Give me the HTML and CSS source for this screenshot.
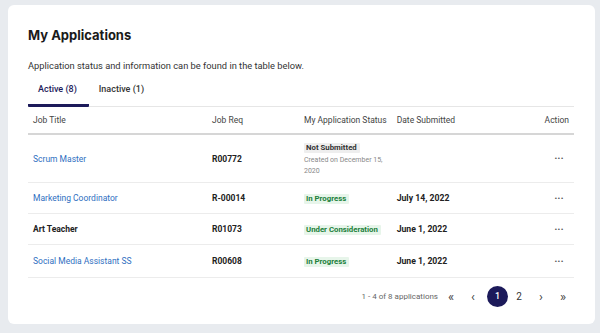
FILE: index.html
```html
<!DOCTYPE html>
<html>
<head>
<meta charset="utf-8">
<link rel="stylesheet" href="styles.css">
</head>
<body>
<div class="card">
  <h1 class="title">My Applications</h1>
  <p class="subtitle">Application status and information can be found in the table below.</p>
  <div class="tabs">
    <div class="tab active">Active (8)</div>
    <div class="tab">Inactive (1)</div>
  </div>
  <table class="apps">
    <thead>
      <tr>
        <th class="c-title">Job Title</th>
        <th class="c-req">Job Req</th>
        <th class="c-status">My Application Status</th>
        <th class="c-date">Date Submitted</th>
        <th class="c-action">Action</th>
      </tr>
    </thead>
    <tbody>
      <tr class="tall">
        <td><a class="link">Scrum Master</a></td>
        <td class="req">R00772</td>
        <td>
          <span class="badge grey">Not Submitted</span>
          <div class="created">Created on December 15,<br>2020</div>
        </td>
        <td class="date"></td>
        <td class="c-action"><span class="dots">&bull;&bull;&bull;</span></td>
      </tr>
      <tr>
        <td><a class="link">Marketing Coordinator</a></td>
        <td class="req">R-00014</td>
        <td><span class="badge green">In Progress</span></td>
        <td class="date">July 14, 2022</td>
        <td class="c-action"><span class="dots">&bull;&bull;&bull;</span></td>
      </tr>
      <tr>
        <td class="plain">Art Teacher</td>
        <td class="req">R01073</td>
        <td><span class="badge green">Under Consideration</span></td>
        <td class="date">June 1, 2022</td>
        <td class="c-action"><span class="dots">&bull;&bull;&bull;</span></td>
      </tr>
      <tr class="last">
        <td><a class="link">Social Media Assistant SS</a></td>
        <td class="req">R00608</td>
        <td><span class="badge green">In Progress</span></td>
        <td class="date">June 1, 2022</td>
        <td class="c-action"><span class="dots">&bull;&bull;&bull;</span></td>
      </tr>
    </tbody>
  </table>
  <div class="pager">
    <span class="count">1 - 4 of 8 applications</span>
    <span class="pbtn arrow">&laquo;</span>
    <span class="pbtn arrow">&lsaquo;</span>
    <span class="pbtn current">1</span>
    <span class="pbtn">2</span>
    <span class="pbtn arrow">&rsaquo;</span>
    <span class="pbtn arrow">&raquo;</span>
  </div>
</div>
</body>
</html>
```

FILE: styles.css
```css
html, body {
  margin: 0;
  padding: 0;
}
body {
  background: #e8ebef;
  width: 600px;
  height: 333px;
  padding: 5px 5px 0 8px;
  box-sizing: border-box;
  font-family: Roboto, "Liberation Sans", sans-serif;
  color: #222;
}
.card {
  background: #fff;
  width: 587px;
  height: 319px;
  border-radius: 6px;
  box-sizing: border-box;
  padding: 21px 20px 0 20px;
}
.title {
  margin: 0;
  font-family: Inter, Roboto, sans-serif;
  font-size: 13px;
  font-weight: 700;
  line-height: 18px;
  color: #1a1a1a;
}
.subtitle {
  margin: 16px 0 0 0;
  font-size: 9.3px;
  line-height: 12px;
  color: #333;
}
.tabs {
  display: flex;
  margin-top: 9px;
  border-bottom: 1px solid #e6e6e6;
  width: 546px;
}
.tab {
  font-size: 9px;
  font-weight: 500;
  line-height: 12px;
  padding: 2px 12px 9px 10px;
  color: #333;
  border-bottom: 3px solid transparent;
  margin-bottom: -1px;
}
.tab.active {
  color: #1c1a5a;
  border-bottom-color: #1c1a5a;
  border-radius: 1px;
}
.apps {
  width: 546px;
  border-collapse: collapse;
  font-size: 8.5px;
}
.apps th {
  text-align: left;
  font-weight: 400;
  color: #444;
  height: 26px;
  padding: 0 5px;
  border-bottom: 2px solid #d6d6d6;
  line-height: 12px;
  white-space: nowrap;
}
.apps td {
  padding: 0 5px;
  height: 30px;
  border-bottom: 1px solid #ececec;
  vertical-align: middle;
  line-height: 12px;
  white-space: nowrap;
}
.apps tr.tall td {
  height: 47px;
}
.apps tr.last td {
  height: 32px;
}
.c-title { width: 169px; }
.c-req { width: 82px; }
.c-status { width: 82px; }
.c-date { width: 80px; }
.apps .c-action {
  text-align: right;
  padding-right: 5px;
}
.link {
  color: #2f6fbf;
  text-decoration: none;
}
.plain {
  font-weight: 700;
  color: #222;
}
.req {
  font-weight: 700;
  color: #222;
}
.date {
  font-size: 8.7px;
  font-weight: 700;
  color: #222;
}
.badge {
  display: inline-block;
  font-size: 7.8px;
  font-weight: 700;
  line-height: 10px;
  padding: 0 3px 0 2px;
  border-radius: 1px;
}
.badge.grey {
  background: #eeeeee;
  color: #333;
}
.badge.green {
  background: #e7f5ea;
  color: #21803a;
}
.created {
  font-size: 7px;
  line-height: 11px;
  color: #888;
  margin-top: 2px;
}
.dots {
  font-size: 8px;
  letter-spacing: 0.5px;
  color: #555;
  margin-right: 5px;
}
.pager {
  display: flex;
  justify-content: flex-end;
  align-items: center;
  width: 546px;
  margin-top: 7px;
  font-size: 9px;
  color: #333;
}
.count {
  font-size: 8px;
  color: #666;
  margin-right: 2px;
}
.pbtn {
  width: 22px;
  height: 22px;
  display: flex;
  align-items: center;
  justify-content: center;
  font-size: 10px;
  color: #333;
}
.pbtn.arrow {
  font-size: 13px;
  font-weight: 400;
  color: #444;
}
.pbtn.arrow:nth-child(3) {
  margin-right: 3px;
}
.pbtn.current {
  width: 21px;
  height: 21px;
  border-radius: 50%;
  background: #1c1a5a;
  color: #fff;
  font-size: 9px;
  font-weight: 500;
}
```
